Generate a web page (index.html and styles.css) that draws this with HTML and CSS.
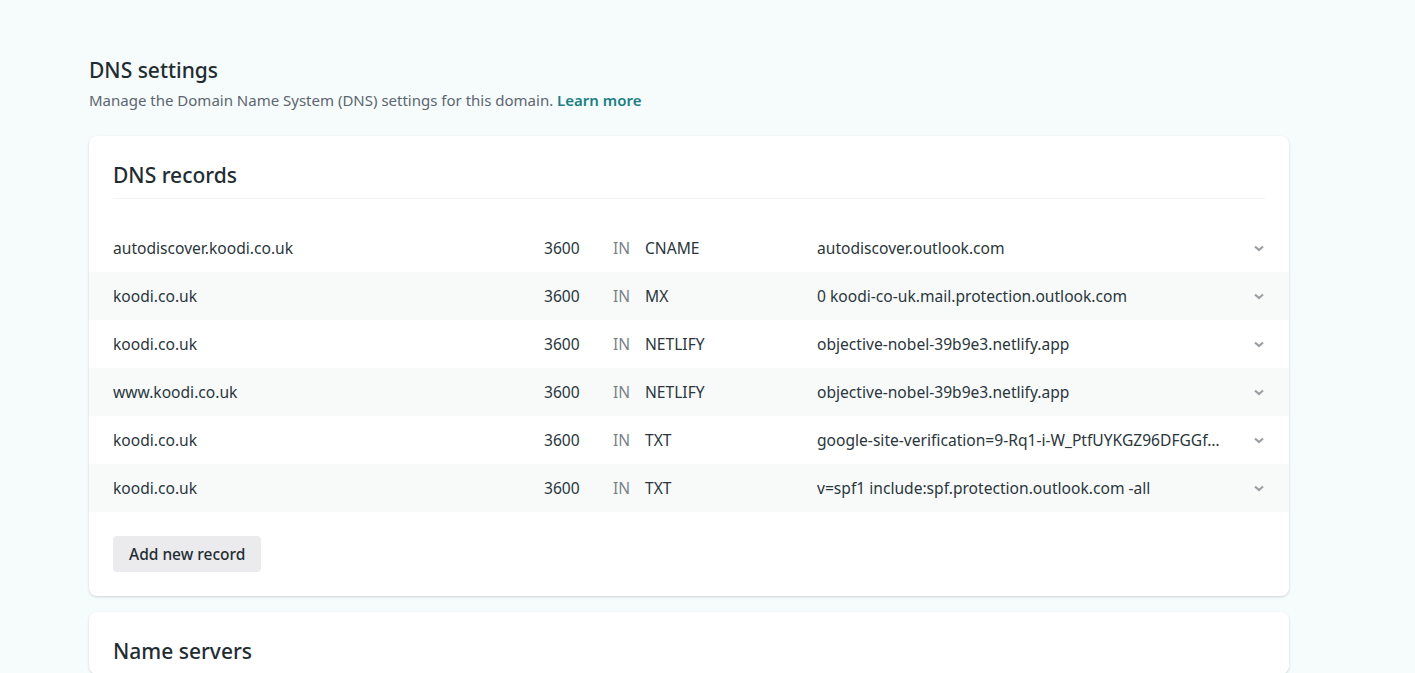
FILE: index.html
```html
<!DOCTYPE html>
<html lang="en">
<head>
<meta charset="utf-8">
<title>DNS settings</title>
<link rel="stylesheet" href="styles.css">
</head>
<body>
<main class="page">
  <header class="section-head">
    <h1 class="section-title">DNS settings</h1>
    <p class="section-desc">Manage the Domain Name System (DNS) settings for this domain. <a class="link" href="#">Learn more</a></p>
  </header>

  <section class="card">
    <div class="card-head">
      <h2 class="card-title">DNS records</h2>
    </div>
    <div class="records">
      <div class="record">
        <span class="name">autodiscover.koodi.co.uk</span>
        <span class="ttl">3600</span>
        <span class="cls">IN</span>
        <span class="type">CNAME</span>
        <span class="value">autodiscover.outlook.com</span>
        <span class="chev"><svg width="10" height="7" viewBox="0 0 10 7"><path d="M1 1.5l4 3.5 4-3.5" fill="none" stroke="#9aa0a3" stroke-width="2.2"/></svg></span>
      </div>
      <div class="record">
        <span class="name">koodi.co.uk</span>
        <span class="ttl">3600</span>
        <span class="cls">IN</span>
        <span class="type">MX</span>
        <span class="value">0 koodi-co-uk.mail.protection.outlook.com</span>
        <span class="chev"><svg width="10" height="7" viewBox="0 0 10 7"><path d="M1 1.5l4 3.5 4-3.5" fill="none" stroke="#9aa0a3" stroke-width="2.2"/></svg></span>
      </div>
      <div class="record">
        <span class="name">koodi.co.uk</span>
        <span class="ttl">3600</span>
        <span class="cls">IN</span>
        <span class="type">NETLIFY</span>
        <span class="value">objective-nobel-39b9e3.netlify.app</span>
        <span class="chev"><svg width="10" height="7" viewBox="0 0 10 7"><path d="M1 1.5l4 3.5 4-3.5" fill="none" stroke="#9aa0a3" stroke-width="2.2"/></svg></span>
      </div>
      <div class="record">
        <span class="name">www.koodi.co.uk</span>
        <span class="ttl">3600</span>
        <span class="cls">IN</span>
        <span class="type">NETLIFY</span>
        <span class="value">objective-nobel-39b9e3.netlify.app</span>
        <span class="chev"><svg width="10" height="7" viewBox="0 0 10 7"><path d="M1 1.5l4 3.5 4-3.5" fill="none" stroke="#9aa0a3" stroke-width="2.2"/></svg></span>
      </div>
      <div class="record">
        <span class="name">koodi.co.uk</span>
        <span class="ttl">3600</span>
        <span class="cls">IN</span>
        <span class="type">TXT</span>
        <span class="value">google-site-verification=9-Rq1-i-W_PtfUYKGZ96DFGGf…</span>
        <span class="chev"><svg width="10" height="7" viewBox="0 0 10 7"><path d="M1 1.5l4 3.5 4-3.5" fill="none" stroke="#9aa0a3" stroke-width="2.2"/></svg></span>
      </div>
      <div class="record">
        <span class="name">koodi.co.uk</span>
        <span class="ttl">3600</span>
        <span class="cls">IN</span>
        <span class="type">TXT</span>
        <span class="value">v=spf1 include:spf.protection.outlook.com -all</span>
        <span class="chev"><svg width="10" height="7" viewBox="0 0 10 7"><path d="M1 1.5l4 3.5 4-3.5" fill="none" stroke="#9aa0a3" stroke-width="2.2"/></svg></span>
      </div>
    </div>
    <div class="card-foot">
      <button class="btn" type="button">Add new record</button>
    </div>
  </section>

  <section class="card">
    <div class="card-head plain">
      <h2 class="card-title">Name servers</h2>
    </div>
  </section>
</main>
</body>
</html>
```

FILE: styles.css
```css
* { box-sizing: border-box; }
html, body { margin: 0; padding: 0; }
body {
  background: #f6fbfb;
  font-family: "Noto Sans", "Open Sans", sans-serif;
  color: #1f2d33;
  font-size: 15px;
  height: 673px;
  overflow: hidden;
}
.page {
  padding: 56px 0 0 89px;
  width: 1289px;
}
.section-head { margin-bottom: 24px; }
.section-title {
  margin: 0;
  font-size: 21px;
  font-weight: 500;
  line-height: 28px;
  color: #1f2d33;
}
.section-desc {
  margin: 4px 0 0;
  font-size: 15px;
  line-height: 24px;
  color: #5b6670;
}
.link {
  color: #1c7f84;
  font-weight: 600;
  text-decoration: none;
}
.card {
  background: #fff;
  border-radius: 8px;
  box-shadow: 0 1px 3px rgba(14, 30, 37, 0.12), 0 1px 2px rgba(14, 30, 37, 0.06);
  margin-bottom: 16px;
}
.card-head {
  margin: 0 24px;
  padding: 25px 0 9px;
  border-bottom: 1px solid #f2f4f4;
}
.card-head.plain { border-bottom: none; }
.card-title {
  margin: 0;
  font-size: 21px;
  font-weight: 500;
  line-height: 28px;
  color: #1f2d33;
}
.records { padding-top: 25px; }
.record {
  display: grid;
  grid-template-columns: 431px 69px 32px 172px 1fr 20px;
  align-items: center;
  height: 48px;
  padding: 0 24px;
  font-size: 15.6px;
  color: #2a363c;
}
.record:nth-child(even) { background: #f8fafa; }
.cls { color: #7b8286; }
.value {
  white-space: nowrap;
  overflow: hidden;
  text-overflow: ellipsis;
}
.chev {
  display: flex;
  justify-content: flex-end;
  align-items: center;
  padding-right: 1px;
}
.chev svg { display: block; }
.card-foot { padding: 24px; }
.btn {
  font-family: inherit;
  font-size: 15.5px;
  font-weight: 500;
  color: #1f2d33;
  background: #ebebed;
  border: none;
  border-radius: 4px;
  height: 36px;
  padding: 0 16px;
}
```
